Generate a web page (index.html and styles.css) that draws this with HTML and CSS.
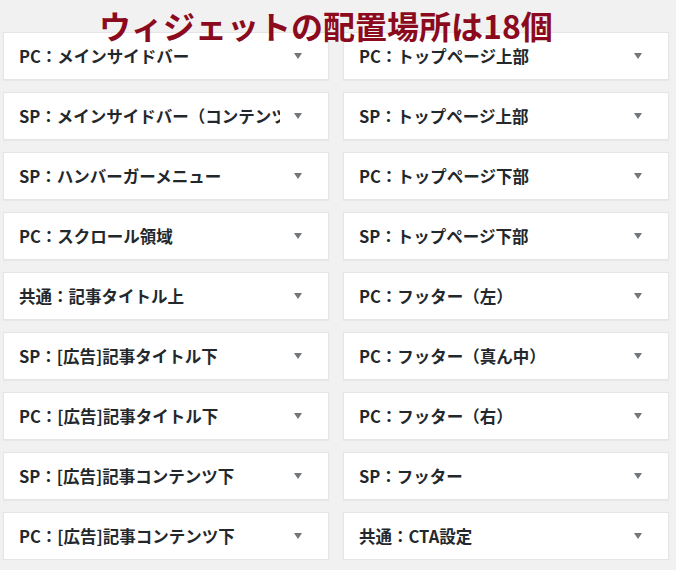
FILE: index.html
```html
<!DOCTYPE html>
<html lang="ja">
<head>
    <meta charset="UTF-8">
    <meta name="viewport" content="width=device-width, initial-scale=1.0">
    <title>ウィジェットの配置場所</title>
    <link rel="stylesheet" href="styles.css">
</head>
<body>
    <h1 class="caption">ウィジェットの配置場所は18個</h1>

    <div class="widget-areas">
        <div class="area"><span class="area-name">PC：メインサイドバー</span><span class="arrow"></span></div>
        <div class="area"><span class="area-name">PC：トップページ上部</span><span class="arrow"></span></div>

        <div class="area"><span class="area-name">SP：メインサイドバー（コンテンツ下）</span><span class="arrow"></span></div>
        <div class="area"><span class="area-name">SP：トップページ上部</span><span class="arrow"></span></div>

        <div class="area"><span class="area-name">SP：ハンバーガーメニュー</span><span class="arrow"></span></div>
        <div class="area"><span class="area-name">PC：トップページ下部</span><span class="arrow"></span></div>

        <div class="area"><span class="area-name">PC：スクロール領域</span><span class="arrow"></span></div>
        <div class="area"><span class="area-name">SP：トップページ下部</span><span class="arrow"></span></div>

        <div class="area"><span class="area-name">共通：記事タイトル上</span><span class="arrow"></span></div>
        <div class="area"><span class="area-name">PC：フッター（左）</span><span class="arrow"></span></div>

        <div class="area"><span class="area-name">SP：[広告]記事タイトル下</span><span class="arrow"></span></div>
        <div class="area"><span class="area-name">PC：フッター（真ん中）</span><span class="arrow"></span></div>

        <div class="area"><span class="area-name">PC：[広告]記事タイトル下</span><span class="arrow"></span></div>
        <div class="area"><span class="area-name">PC：フッター（右）</span><span class="arrow"></span></div>

        <div class="area"><span class="area-name">SP：[広告]記事コンテンツ下</span><span class="arrow"></span></div>
        <div class="area"><span class="area-name">SP：フッター</span><span class="arrow"></span></div>

        <div class="area"><span class="area-name">PC：[広告]記事コンテンツ下</span><span class="arrow"></span></div>
        <div class="area"><span class="area-name">共通：CTA設定</span><span class="arrow"></span></div>
    </div>
</body>
</html>
```

FILE: styles.css
```css
body {
    margin: 0;
    padding: 32px 0 0 3px;
    background: #f1f1f1;
    font-family: 'Noto Sans CJK JP', 'Noto Sans', sans-serif;
    color: #23282d;
    position: relative;
    overflow: hidden;
}
.caption {
    position: absolute;
    left: 99px;
    top: 5px;
    margin: 0;
    font-size: 32px;
    line-height: 40px;
    font-weight: bold;
    color: #8b0a1e;
    white-space: nowrap;
    z-index: 2;
}
.widget-areas {
    display: grid;
    grid-template-columns: repeat(2, 326px);
    column-gap: 14px;
    row-gap: 12px;
}
.area {
    display: flex;
    align-items: center;
    height: 48px;
    box-sizing: border-box;
    padding: 0 12px 0 15px;
    background: #fff;
    border: 1px solid #e5e5e5;
    box-shadow: 0 1px 1px rgba(0, 0, 0, 0.04);
}
.area-name {
    flex: 1;
    overflow: hidden;
    white-space: nowrap;
    font-size: 16.5px;
    font-weight: bold;
}
.arrow {
    width: 36px;
    display: flex;
    justify-content: center;
}
.arrow::after {
    content: "";
    border-left: 4px solid transparent;
    border-right: 4px solid transparent;
    border-top: 6px solid #72777c;
}
```
